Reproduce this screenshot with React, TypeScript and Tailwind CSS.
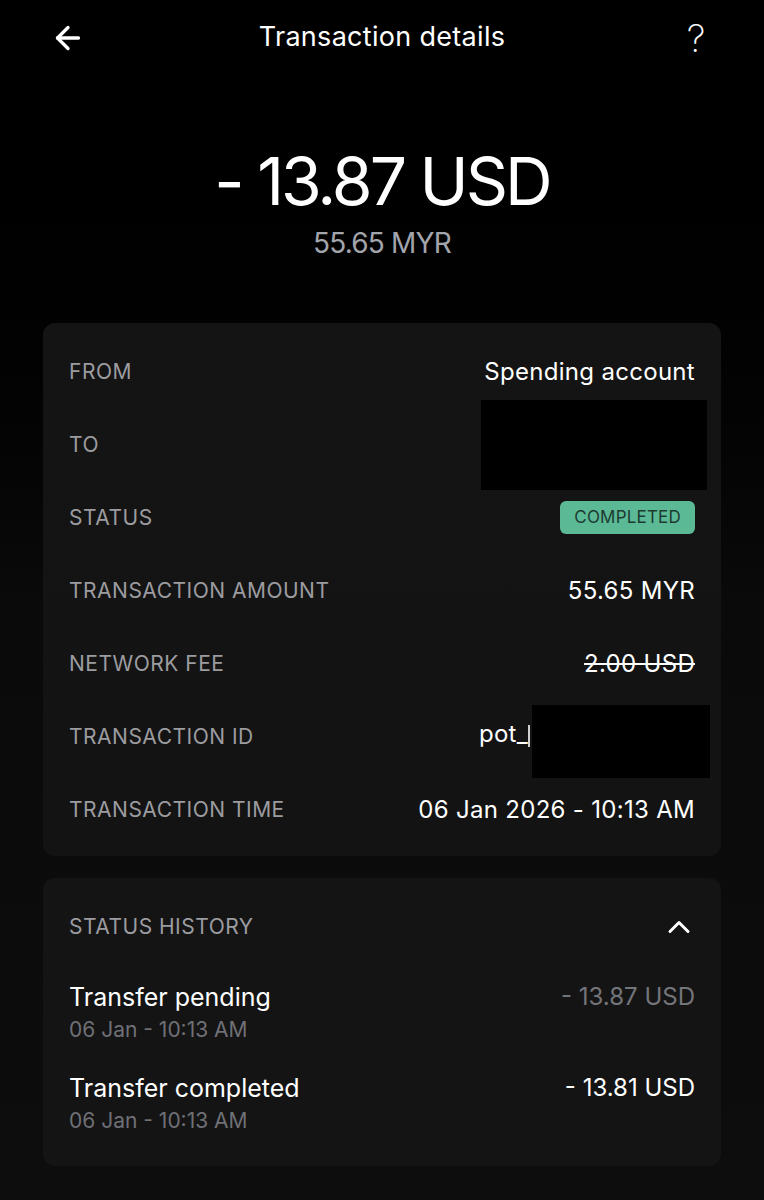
import { ArrowLeft, ChevronUp } from "lucide-react";

const font = { fontFamily: "Inter, 'Noto Sans', sans-serif" };

type DetailRow = {
  label: string;
  value?: string;
  kind?: "text" | "hidden" | "badge" | "struck" | "partial";
};

const details: DetailRow[] = [
  { label: "FROM", value: "Spending account" },
  { label: "TO", kind: "hidden" },
  { label: "STATUS", value: "COMPLETED", kind: "badge" },
  { label: "TRANSACTION AMOUNT", value: "55.65 MYR" },
  { label: "NETWORK FEE", value: "2.00 USD", kind: "struck" },
  { label: "TRANSACTION ID", value: "pot_", kind: "partial" },
  { label: "TRANSACTION TIME", value: "06 Jan 2026 - 10:13 AM" },
];

const history = [
  { title: "Transfer pending", time: "06 Jan - 10:13 AM", amount: "- 13.87 USD", muted: true },
  { title: "Transfer completed", time: "06 Jan - 10:13 AM", amount: "- 13.81 USD", muted: false },
];

function DetailValue({ row }: { row: DetailRow }) {
  if (row.kind === "hidden") {
    return <div className="-mr-3 h-[90px] w-[226px] shrink-0 bg-black" />;
  }
  if (row.kind === "badge") {
    return (
      <span className="rounded-md bg-[#5bb996] px-[14px] py-[5px] text-[17px] leading-[23px] tracking-[0.2px] text-[#1d3b31]">
        {row.value}
      </span>
    );
  }
  if (row.kind === "struck") {
    return <span className="text-[24px] tracking-[0.3px] text-white line-through">{row.value}</span>;
  }
  if (row.kind === "partial") {
    return (
      <div className="-mr-[15px] mt-[10px] flex shrink-0 items-start">
        <span className="mt-[14px] text-[24px] leading-[30px] tracking-[0.3px] text-white">{row.value}</span>
        <span className="mt-[20px] h-[22px] w-[4px] border-l-2 border-white/80" />
        <div className="h-[73px] w-[178px] bg-black" />
      </div>
    );
  }
  return <span className="text-[24px] tracking-[0.3px] text-white">{row.value}</span>;
}

export default function App() {
  return (
    <div
      className="min-h-[1200px] w-full bg-gradient-to-b from-black via-[#0a0a0a] to-[#0d0d0d] text-white"
      style={font}
    >
      <header className="flex h-[75px] items-center justify-between px-[50px]">
        <ArrowLeft className="h-9 w-9 text-white" strokeWidth={2.2} />
        <h1 className="text-[27px] font-normal tracking-[0.3px]">Transaction details</h1>
        <span className="w-9 text-center text-[38px] font-extralight leading-none">?</span>
      </header>

      <div className="flex flex-col items-center pt-[70px]">
        <p className="text-[66px] font-normal leading-[72px] tracking-[-3px]">- 13.87 USD</p>
        <p className="mt-[10px] text-[28px] leading-[32px] tracking-[-0.8px] text-[#a3a5ac]">55.65 MYR</p>
      </div>

      <section className="mx-[43px] mt-[64px] rounded-xl bg-gradient-to-b from-[#141414] to-[#131313] px-[26px] pb-[10px] pt-[12px]">
        {details.map((row) => (
          <div key={row.label} className="flex h-[73px] items-center justify-between">
            <span className="text-[21px] tracking-[0.5px] text-[#9c9ca0]">{row.label}</span>
            <DetailValue row={row} />
          </div>
        ))}
      </section>

      <section className="mx-[43px] mt-[22px] rounded-xl bg-[#141414] px-[26px] pb-[32px] pt-[35px]">
        <div className="flex h-[28px] items-center justify-between">
          <span className="text-[21px] tracking-[0.5px] text-[#9c9ca0]">STATUS HISTORY</span>
          <ChevronUp className="-mr-[2px] h-9 w-9 text-white" strokeWidth={2} />
        </div>
        <div className="mt-[41px] flex flex-col gap-[30px]">
          {history.map((item) => (
            <div key={item.title} className="flex items-start justify-between">
              <div>
                <p className="text-[25px] leading-[30px]">{item.title}</p>
                <p className="mt-[5px] text-[21px] leading-[26px] text-[#6f7076]">{item.time}</p>
              </div>
              <p
                className={`text-[24px] leading-[30px] ${
                  item.muted ? "text-[#74757b]" : "text-white"
                }`}
              >
                {item.amount}
              </p>
            </div>
          ))}
        </div>
      </section>
    </div>
  );
}
